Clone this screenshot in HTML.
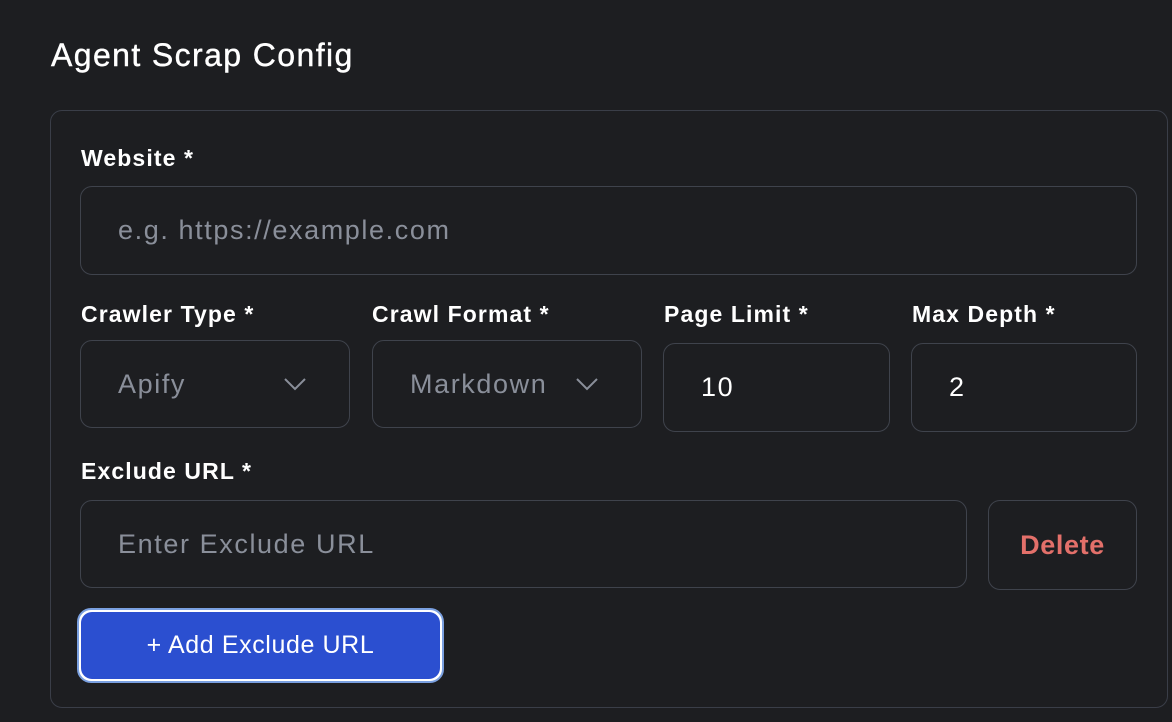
<!DOCTYPE html><html><head><style>
body{margin:0;width:1172px;height:722px;background:#1d1e21;font-family:"Liberation Sans",sans-serif;position:relative;overflow:hidden}
.a{position:absolute;box-sizing:border-box}
.t{color:#fff;font-size:32px;left:51px;top:37px;letter-spacing:1.4px;-webkit-text-stroke:0.4px #fff}
.card{left:50px;top:110px;width:1118px;height:598px;border:1px solid #3a3e48;border-radius:12px}
.l{color:#fff;font-weight:bold;font-size:23px;letter-spacing:1.1px}
.in{border:1px solid #3f434c;border-radius:12px;color:#8a8f9a;font-size:27px;letter-spacing:1.6px;display:flex;align-items:center;padding-left:37px}
.chev{position:absolute;right:42px;top:36px}
</style></head><body>
<div class="a t">Agent Scrap Config</div>
<div class="a card"></div>
<div class="a l" style="left:81px;top:145px">Website *</div>
<div class="a in" style="left:80px;top:186px;width:1057px;height:89px">e.g. https://example.com</div>
<div class="a l" style="left:81px;top:301px">Crawler Type *</div>
<div class="a l" style="left:372px;top:301px">Crawl Format *</div>
<div class="a l" style="left:664px;top:301px">Page Limit *</div>
<div class="a l" style="left:912px;top:301px">Max Depth *</div>
<div class="a in" style="left:80px;top:340px;width:270px;height:88px">Apify<svg class="chev" width="24" height="14" viewBox="0 0 24 14"><path d="M2 2l10 10 10-10" fill="none" stroke="#8a8f9a" stroke-width="2"/></svg></div>
<div class="a in" style="left:372px;top:340px;width:270px;height:88px">Markdown<svg class="chev" width="24" height="14" viewBox="0 0 24 14"><path d="M2 2l10 10 10-10" fill="none" stroke="#8a8f9a" stroke-width="2"/></svg></div>
<div class="a in" style="left:663px;top:343px;width:227px;height:89px;color:#fff">10</div>
<div class="a in" style="left:911px;top:343px;width:226px;height:89px;color:#fff">2</div>
<div class="a l" style="left:81px;top:458px">Exclude URL *</div>
<div class="a in" style="left:80px;top:500px;width:887px;height:88px">Enter Exclude URL</div>
<div class="a in" style="left:988px;top:500px;width:149px;height:90px;padding:0;justify-content:center;color:#e3706a;font-weight:bold;letter-spacing:0.6px">Delete</div>
<div class="a" style="left:77px;top:608px;width:367px;height:75px;border-radius:14px;border:2px solid #7aa0e0;background:#fff;padding:2px">
<div style="width:100%;height:100%;border-radius:11px;background:#2b4fd0;color:#fff;font-size:25px;letter-spacing:0.6px;display:flex;align-items:center;justify-content:center">+ Add Exclude URL</div></div>
</body></html>
